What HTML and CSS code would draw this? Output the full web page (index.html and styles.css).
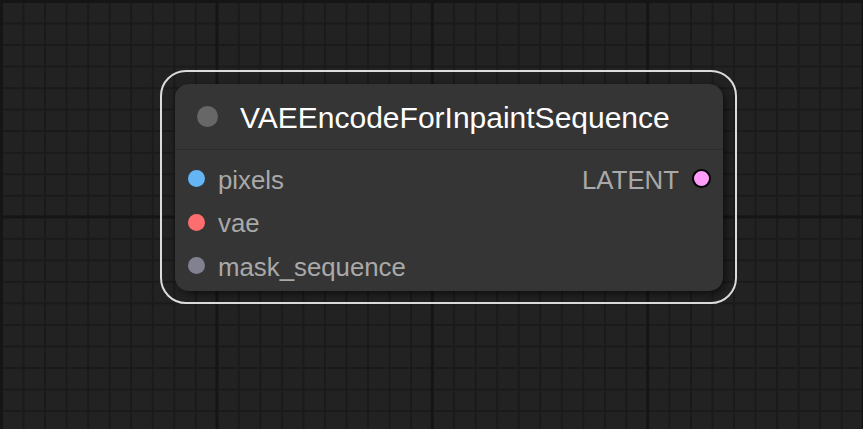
FILE: index.html
```html
<!DOCTYPE html>
<html>
<head>
<meta charset="utf-8">
<link rel="stylesheet" href="styles.css">
</head>
<body>
<div class="canvas">
  <div class="node-sel">
    <div class="node">
      <div class="title">
        <span class="title-dot"></span>
        <span class="title-text">VAEEncodeForInpaintSequence</span>
      </div>
      <div class="slots">
        <div class="row">
          <div class="slot in"><span class="dot blue"></span><span class="label">pixels</span></div>
          <div class="slot out"><span class="label">LATENT</span><span class="dot pink"></span></div>
        </div>
        <div class="row">
          <div class="slot in"><span class="dot red"></span><span class="label">vae</span></div>
        </div>
        <div class="row">
          <div class="slot in"><span class="dot grey"></span><span class="label">mask_sequence</span></div>
        </div>
      </div>
    </div>
  </div>
</div>
</body>
</html>
```

FILE: styles.css
```css
html, body {
  margin: 0;
  padding: 0;
  width: 863px;
  height: 429px;
  overflow: hidden;
}
.canvas {
  position: relative;
  width: 863px;
  height: 429px;
  background-color: #222222;
  background-image:
    linear-gradient(to right, #151515 0, #151515 3px, transparent 3px),
    linear-gradient(to bottom, #151515 0, #151515 3px, transparent 3px),
    linear-gradient(to right, #1a1a1a 0, #1a1a1a 2px, transparent 2px),
    linear-gradient(to bottom, #1a1a1a 0, #1a1a1a 2px, transparent 2px);
  background-size: 215.4px 215.4px, 215.4px 215.4px, 21.54px 21.54px, 21.54px 21.54px;
  background-position: 0 0, 0 0, 1px 1px, 1px 1px;
  font-family: "Liberation Sans", Arial, sans-serif;
}
.node-sel {
  position: absolute;
  left: 160px;
  top: 70px;
  width: 577px;
  height: 234px;
  box-sizing: border-box;
  border: 2px solid #dcdcdc;
  border-radius: 26px;
  padding: 12px 12px 11px 13px;
}
.node {
  width: 548px;
  height: 207px;
  background: #353535;
  border-radius: 14px;
  box-shadow: 3px 3px 8px rgba(0, 0, 0, 0.55);
  display: flex;
  flex-direction: column;
}
.title {
  height: 66px;
  box-sizing: border-box;
  border-bottom: 1px solid #2b2b2b;
  display: flex;
  align-items: center;
  padding-left: 22px;
}
.title-dot {
  width: 21px;
  height: 21px;
  border-radius: 50%;
  background: #676767;
  flex: none;
}
.title-text {
  margin-left: 22px;
  color: #ffffff;
  font-size: 30px;
  line-height: 1;
  position: relative;
  top: 1px;
}
.slots {
  padding-top: 7px;
  display: flex;
  flex-direction: column;
}
.row {
  height: 43.5px;
  display: flex;
  align-items: center;
  justify-content: space-between;
  padding: 0 12px 0 13px;
}
.slot {
  display: flex;
  align-items: center;
  gap: 13px;
}
.label {
  color: #a9a9a9;
  font-size: 25.8px;
  line-height: 1;
  position: relative;
  top: 2px;
}
.dot {
  width: 17px;
  height: 17px;
  border-radius: 50%;
  flex: none;
}
.dot.blue { background: #64b5f6; }
.dot.red { background: #ff6e6e; }
.dot.grey { background: #81818f; }
.dot.pink {
  width: 15px;
  height: 15px;
  background: #ff9cf9;
  border: 2px solid #000;
}
```
